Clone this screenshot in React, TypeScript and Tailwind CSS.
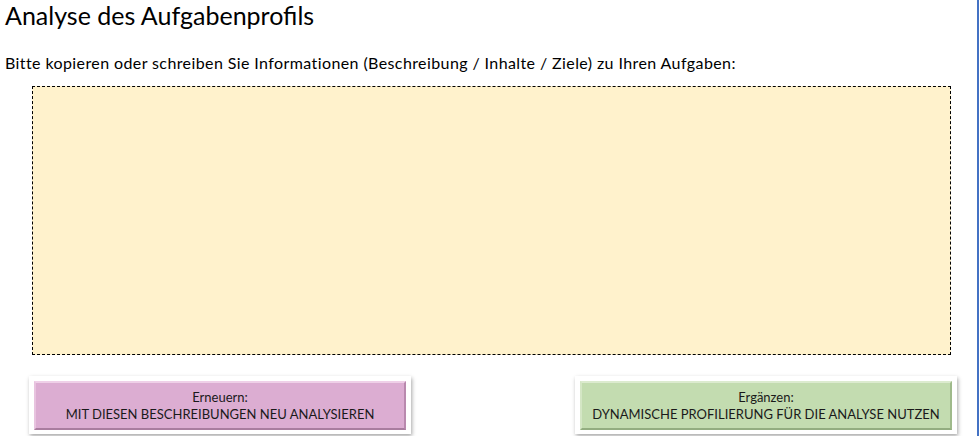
export default function App() {
  return (
    <div className="w-[979px] h-[436px] bg-white overflow-hidden border-r-2 border-[#4472c4] font-['Lato','Liberation_Sans',sans-serif] text-black">
      <h1 className="pl-[5px] pt-[1px] text-[25px] leading-[28px] font-normal">Analyse des Aufgabenprofils</h1>
      <p className="pl-[5px] mt-[25px] text-[16px] leading-[18px] tracking-[0.4px]">
        Bitte kopieren oder schreiben Sie Informationen (Beschreibung / Inhalte / Ziele) zu Ihren Aufgaben:
      </p>
      <div className="ml-[32px] mt-[14px] w-[919px] h-[269px] bg-[#fff2cc] border border-dashed border-black" />
      <div className="flex justify-between pl-[29px] pr-[20px] mt-[21px]">
        <ActionButton tone="pink" label="Erneuern:" action="MIT DIESEN BESCHREIBUNGEN NEU ANALYSIEREN" />
        <ActionButton tone="green" label="Ergänzen:" action="DYNAMISCHE PROFILIERUNG FÜR DIE ANALYSE NUTZEN" />
      </div>
    </div>
  );
}

function ActionButton({ tone, label, action }: { tone: 'pink' | 'green'; label: string; action: string }) {
  const face =
    tone === 'pink'
      ? 'bg-[#dcadd2] border-t-[#efd0e8] border-l-[#e8c3df] border-r-[#b989ae] border-b-[#a97d9f]'
      : 'bg-[#c3dcb0] border-t-[#dcebcf] border-l-[#d4e6c5] border-r-[#9fba8b] border-b-[#93ad80]';
  return (
    <div className="w-[382px] h-[58px] bg-white p-[5px] pb-[4px] shadow-[1px_2px_4px_rgba(0,0,0,0.35)]">
      <div className={`h-full border-2 ${face} flex flex-col items-center justify-center text-[13px] leading-[17px] text-[#1a1a1a]`}>
        <span>{label}</span>
        <span>{action}</span>
      </div>
    </div>
  );
}
